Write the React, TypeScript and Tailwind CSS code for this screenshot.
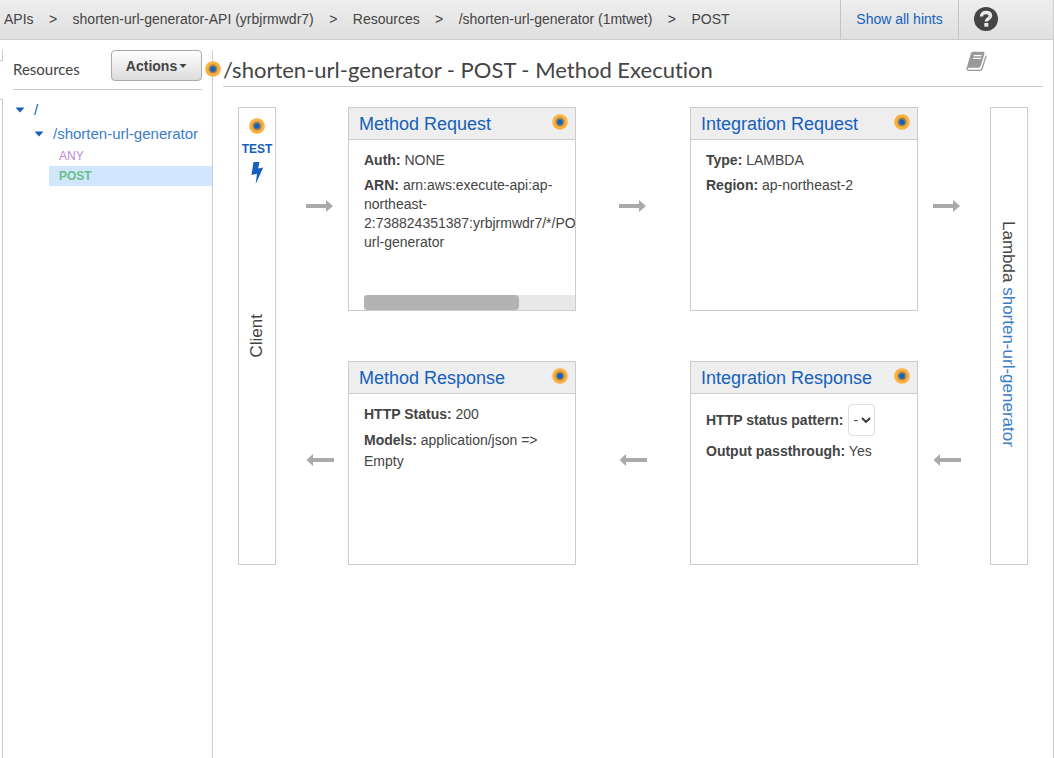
import type { ReactNode } from "react";

function HintDot() {
  return (
    <button type="button" aria-label="Show hint" className="block size-4 shrink-0 cursor-pointer">
      <svg viewBox="0 0 16 16" className="block size-4" aria-hidden="true">
        <circle cx="8" cy="8" r="7.800" fill="#fbb040" />
        <circle cx="8" cy="8" r="4.700" fill="#b98d45" />
        <circle cx="8" cy="8" r="3.500" fill="#7d7a66" />
        <circle cx="8" cy="8" r="2.600" fill="#1560bd" />
      </svg>
    </button>
  );
}

function Arrow({ left = false }: { left?: boolean }) {
  return (
    <svg viewBox="0 0 28 12" className="block h-3 w-7" aria-hidden="true" fill="#aaa">
      {left ? <path d="M28 4v4H7v4L.5 6 7 0v4z" /> : <path d="M0 4v4h20v4l7-6-7-6v4z" />}
    </svg>
  );
}

function Card({ title, children }: { title: string; children: ReactNode }) {
  return (
    <section className="flex min-h-[204px] min-w-0 flex-col border border-[#ccc] bg-white">
      <header className="flex h-8 items-center justify-between border-b border-[#ccc] bg-[#eee] pr-[7px] pl-[10px]">
        <h2 className="text-lg leading-6">
          <a href="#" className="text-[#1560bd]">
            {title}
          </a>
        </h2>
        <div className="pb-1">
          <HintDot />
        </div>
      </header>
      {children}
    </section>
  );
}

function Caret() {
  return (
    <svg viewBox="0 0 10 6" className="h-[6px] w-[10px] shrink-0" aria-hidden="true">
      <path d="M.5.5h9L5 5.5z" fill="#1560bd" />
    </svg>
  );
}

const crumbs = [
  "APIs",
  "shorten-url-generator-API (yrbjrmwdr7)",
  "Resources",
  "/shorten-url-generator (1mtwet)",
  "POST",
];

function TopBar() {
  return (
    <header className="flex h-10 items-stretch border-b border-[#ccc] bg-linear-to-b from-[#eee] to-[#dfdfdf]">
      <nav aria-label="Breadcrumb" className="flex flex-1 items-center pb-[2px] pl-1">
        <ol className="flex items-center whitespace-nowrap">
          {crumbs.map((crumb, i) => (
            <li key={crumb} className="flex items-center">
              {i > 0 && <span className="w-[39px] text-center">&gt;</span>}
              <span>{crumb}</span>
            </li>
          ))}
        </ol>
      </nav>
      <div className="flex w-[118px] items-center justify-center border-l border-[#c4c4c4] pb-[2px]">
        <a href="#" className="text-[#1560bd]">
          Show all hints
        </a>
      </div>
      <div className="flex w-[95px] items-center border-l border-[#c4c4c4] pb-[2px] pl-[15px]">
        <button type="button" aria-label="Help" className="cursor-pointer">
          <svg viewBox="0 0 24 24" className="block size-6" aria-hidden="true">
            <circle cx="12" cy="12" r="12" fill="#444" />
            <path
              d="M7.500 9.600C7.500 6.900 9.300 5.500 12.100 5.500c2.700 0 4.400 1.300 4.400 3.400 0 2.900-4.200 2.700-4.200 5.700"
              fill="none"
              stroke="#eaeaea"
              strokeWidth="3.400"
            />
            <rect x="10.300" y="16" width="4" height="3.700" fill="#eaeaea" />
          </svg>
        </button>
      </div>
    </header>
  );
}

function Sidebar() {
  return (
    <div className="flex w-[213px] shrink-0 pt-[10px]">
      <div className="flex w-[3px] shrink-0 flex-col">
        <div className="h-[11px] border-r border-b border-[#ccc]" />
        <div className="h-[38px]" />
        <div className="flex-1 border-t border-r border-[#ccc]" />
      </div>
      <aside className="flex-1 border-r border-[#ccc]">
        <div className="mx-[10px] flex h-10 items-start justify-between border-b border-[#ccc]">
          <h2 className="pt-[7px] font-[Lato,sans-serif] text-[15px] leading-6">Resources</h2>
          <button
            type="button"
            className="flex h-[31px] w-[91px] cursor-pointer items-center justify-center gap-[2px] rounded border border-[#aaa] bg-linear-to-b from-white to-[#dcdcdc] text-sm font-bold"
          >
            Actions
            <svg viewBox="0 0 8 4" className="h-1 w-2" aria-hidden="true">
              <path d="M.5 0h7L4 4z" fill="#444" />
            </svg>
          </button>
        </div>
        <ul className="pt-2 text-[15px]">
          <li>
            <a href="#" className="flex h-6 items-center gap-[9px] pl-3 text-[#1560bd]">
              <Caret />/
            </a>
            <ul>
              <li>
                <a href="#" className="flex h-6 items-center gap-[9px] pl-[31px] text-[#3b7cc9]">
                  <Caret />
                  /shorten-url-generator
                </a>
                <ul className="ml-[46px] text-xs leading-5">
                  <li>
                    <a href="#" className="block pl-[10px] text-[#c187d4]">
                      ANY
                    </a>
                  </li>
                  <li>
                    <a href="#" className="block bg-[#d1e7ff] pl-[10px] font-bold text-[#6bc183]">
                      POST
                    </a>
                  </li>
                </ul>
              </li>
            </ul>
          </li>
        </ul>
      </aside>
    </div>
  );
}

function Execution() {
  return (
    <div className="grid grid-cols-[38px_72fr_228px_114fr_228px_72fr_38px] grid-rows-[auto_auto] gap-y-[50px] px-[15px] pt-5">
      <div className="col-start-1 row-span-2 row-start-1 grid justify-items-center border border-[#ccc]">
        <div className="col-start-1 row-start-1 flex flex-col items-center self-start pt-[10px]">
          <HintDot />
          <a href="#" className="mt-[7px] flex flex-col items-center text-xs leading-4 font-bold text-[#1560bd]">
            TEST
            <svg viewBox="0 0 14 24" className="mt-1 h-6 w-[14px]" aria-hidden="true">
              <path d="M3.500 1h6L8.200 7.500l5-1L5.700 23 7 12.800l-5.500 1.300z" fill="#1560bd" />
            </svg>
          </a>
        </div>
        <span className="col-start-1 row-start-1 rotate-180 self-center text-[17px] leading-6 [writing-mode:vertical-rl]">
          Client
        </span>
      </div>

      <div className="col-start-2 row-start-1 flex items-center justify-center pb-[6px] pl-4">
        <Arrow />
      </div>
      <div className="col-start-3 row-start-1 grid">
        <Card title="Method Request">
          <div className="flex flex-1 flex-col overflow-hidden pt-[10px] pl-[15px]">
            <p className="leading-5">
              <b>Auth:</b> NONE
            </p>
            <p className="mt-[6px] leading-[19px]">
              <b>ARN:</b> arn:aws:execute-api:ap-northeast-
              <span className="whitespace-nowrap">2:738824351387:yrbjrmwdr7/*/POST/shorten-</span>
              <br />
              url-generator
            </p>
            <div className="mt-auto h-[15px] bg-[#e8e8e8]">
              <div className="h-full w-[155px] rounded-[4px] bg-[#b3b3b3]" />
            </div>
          </div>
        </Card>
      </div>
      <div className="col-start-4 row-start-1 flex items-center justify-center pb-[6px]">
        <Arrow />
      </div>
      <div className="col-start-5 row-start-1 grid">
        <Card title="Integration Request">
          <div className="pt-[10px] pl-[15px]">
            <p className="leading-5">
              <b>Type:</b> LAMBDA
            </p>
            <p className="mt-[5px] leading-5">
              <b>Region:</b> ap-northeast-2
            </p>
          </div>
        </Card>
      </div>
      <div className="col-start-6 row-start-1 flex items-center justify-center pr-[14px] pb-[6px]">
        <Arrow />
      </div>

      <div className="col-start-2 row-start-2 flex items-center justify-center pb-[6px] pl-4">
        <Arrow left />
      </div>
      <div className="col-start-3 row-start-2 grid">
        <Card title="Method Response">
          <div className="px-[15px] pt-[10px]">
            <p className="leading-5">
              <b>HTTP Status:</b> 200
            </p>
            <p className="mt-[6px] leading-[21px]">
              <b>Models:</b> application/json =&gt; Empty
            </p>
          </div>
        </Card>
      </div>
      <div className="col-start-4 row-start-2 flex items-center justify-center pb-[6px]">
        <Arrow left />
      </div>
      <div className="col-start-5 row-start-2 grid">
        <Card title="Integration Response">
          <div className="pt-[10px] pl-[15px]">
            <div className="flex items-center gap-[5px]">
              <label htmlFor="status-pattern" className="font-bold">
                HTTP status pattern:
              </label>
              <div className="relative">
                <select
                  id="status-pattern"
                  className="block h-8 w-[27px] appearance-none rounded-[4px] border border-[#ddd] bg-white pl-1 text-sm"
                >
                  <option>-</option>
                </select>
                <svg
                  viewBox="0 0 10 6"
                  className="pointer-events-none absolute top-[13px] right-1 h-[6px] w-[10px]"
                  aria-hidden="true"
                >
                  <path d="M1 1l4 4 4-4" fill="none" stroke="#333" strokeWidth="1.800" />
                </svg>
              </div>
            </div>
            <p className="mt-[5px] leading-5">
              <b>Output passthrough:</b> Yes
            </p>
          </div>
        </Card>
      </div>
      <div className="col-start-6 row-start-2 flex items-center justify-center pr-[14px] pb-[6px]">
        <Arrow left />
      </div>

      <div className="col-start-7 row-span-2 row-start-1 flex items-center justify-center border border-[#ccc]">
        <p className="pr-[2px] pb-1 text-[17px] leading-6 whitespace-nowrap [writing-mode:vertical-rl]">
          Lambda{" "}
          <a href="#" className="text-[#3b7cc9]">
            shorten-url-generator
          </a>
        </p>
      </div>
    </div>
  );
}

export default function App() {
  return (
    <div className="flex min-h-screen flex-col border-r border-[#ccc] bg-white font-['Liberation_Sans',Arial,sans-serif] text-sm leading-5 text-[#444] antialiased">
      <TopBar />
      <div className="flex flex-1">
        <Sidebar />
        <main className="min-w-0 flex-1 px-[10px]">
          <div className="relative flex h-[47px] items-end justify-between border-b border-[#ccc]">
            <div className="absolute top-[21px] left-[-18px]">
              <HintDot />
            </div>
            <h1 className="font-[Lato,sans-serif] text-[22px] leading-8 [font-variant-ligatures:none]">
              /shorten-url-generator - POST - Method Execution
            </h1>
            <button
              type="button"
              aria-label="Documentation"
              className="mr-[56px] cursor-pointer self-start pt-[11px]"
            >
              <svg viewBox="0 0 21 21" className="block size-[21px]" aria-hidden="true">
                <path
                  d="M1 16.500q-.4 2.900 2 2.900h10.900q1.600 0 2.100-1.600L20.200 4.600"
                  fill="none"
                  stroke="#999"
                  strokeWidth="1.300"
                />
                <path
                  d="M6.800.8h10.400q1.700 0 1.300 1.700l-3.700 12.300q-.6 1.900-2.400 1.900H3.200q-1.200 0-2.200.8-.3-1 .2-2.300L4.900 2.300Q5.400.8 6.800.8z"
                  fill="#999"
                />
                <path d="M7.700 4.600h8M6.900 7.400h8" stroke="#fff" strokeWidth="1.300" />
              </svg>
            </button>
          </div>
          <Execution />
        </main>
      </div>
    </div>
  );
}
